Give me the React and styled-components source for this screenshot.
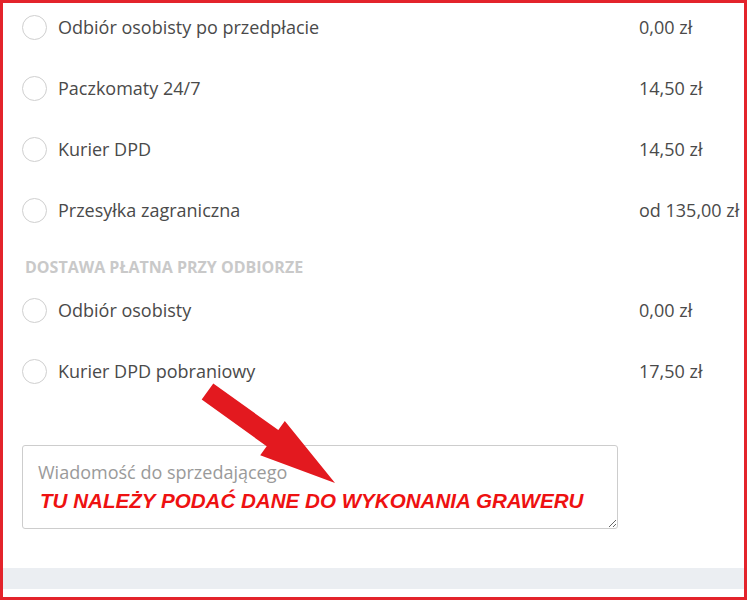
import React from "react";
import styled, { createGlobalStyle } from "styled-components";

const GlobalStyle = createGlobalStyle`
  html, body {
    margin: 0;
    padding: 0;
    background: #fff;
  }
  body {
    font-family: "Open Sans", "Liberation Sans", sans-serif;
  }
`

const Frame = styled.div`
  position: relative;
  box-sizing: border-box;
  width: 747px;
  height: 600px;
  border: 3px solid #e3232b;
  background: #fff;
  display: flex;
  flex-direction: column;
  overflow: hidden;
`

const Content = styled.div`
  display: flex;
  flex-direction: column;
  padding-left: 19px;
  flex: 1;
`

const Option = styled.label`
  display: flex;
  align-items: center;
  height: 48px;
  margin-bottom: 13px;
  cursor: pointer;

  &:last-of-type { margin-bottom: 0; }
`

const Radio = styled.span`
  box-sizing: border-box;
  width: 25px;
  height: 25px;
  border-radius: 50%;
  border: 1.5px solid #cfcfcf;
  background: #fff;
  flex-shrink: 0;
`

const Label = styled.span`
  flex: 1;
  margin-left: 11px;
  font-size: 18px;
  color: #4a4a4a;
  white-space: nowrap;
`

const Price = styled.span`
  width: 105px;
  font-size: 18px;
  color: #4a4a4a;
  white-space: nowrap;
`

const Group = styled.div`
  display: flex;
  flex-direction: column;
`

const GroupTitle = styled.h4`
  margin: 23px 0 9px 3px;
  font-size: 16px;
  line-height: 20px;
  font-weight: 700;
  text-transform: uppercase;
  color: #c9c9c9;
`

const MessageBox = styled.div`
  position: relative;
  width: 596px;
  margin: 50px 0 0 0;
`

const Textarea = styled.textarea`
  box-sizing: border-box;
  display: block;
  width: 596px;
  height: 84px;
  padding: 14px 15px;
  border: 1px solid #cdcdcd;
  border-radius: 3px;
  font-family: "Open Sans", "Liberation Sans", sans-serif;
  font-size: 18px;
  line-height: 24px;
  color: #444;
  outline: none;

  &::placeholder { color: #9a9a9a; }
`

const Note = styled.span`
  position: absolute;
  left: 18px;
  top: 44px;
  font-family: "Liberation Sans", Arial, sans-serif;
  font-size: 20.6px;
  line-height: 24px;
  font-weight: 700;
  font-style: italic;
  color: #ee1111;
  white-space: nowrap;
  pointer-events: none;
`

const Band = styled.div`
  height: 21px;
  margin-bottom: 8px;
  background: #ebeef2;
`

const Arrow = styled.svg`
  position: absolute;
  left: 192px;
  top: 375px;
  width: 145px;
  height: 110px;
`

const prepaid = [
  { id: 1, name: "Odbiór osobisty po przedpłacie", price: "0,00 zł" },
  { id: 2, name: "Paczkomaty 24/7", price: "14,50 zł" },
  { id: 3, name: "Kurier DPD", price: "14,50 zł" },
  { id: 4, name: "Przesyłka zagraniczna", price: "od 135,00 zł" },
]

const onDelivery = [
  { id: 5, name: "Odbiór osobisty", price: "0,00 zł" },
  { id: 6, name: "Kurier DPD pobraniowy", price: "17,50 zł" },
]

const ShippingOption = ({ item }) => (
  <Option>
    <Radio />
    <Label>{item.name}</Label>
    <Price>{item.price}</Price>
  </Option>
)

const App = () => (
  <>
    <GlobalStyle />
    <Frame>
      <Content>
        <Group>
          {prepaid.map(item => <ShippingOption item={item} key={item.id} />)}
        </Group>
        <GroupTitle>Dostawa płatna przy odbiorze</GroupTitle>
        <Group>
          {onDelivery.map(item => <ShippingOption item={item} key={item.id} />)}
        </Group>
        <MessageBox>
          <Textarea placeholder="Wiadomość do sprzedającego" />
          <Note>TU NALEŻY PODAĆ DANE DO WYKONANIA GRAWERU</Note>
        </MessageBox>
      </Content>
      <Band />
      <Arrow viewBox="195 378 145 110">
        <polygon
          fill="#e3191f"
          points="213.3,383.4 278.3,430.1 284.8,421.1 335,483 260.2,455.3 266.7,446.3 201.7,399.6"
        />
      </Arrow>
    </Frame>
  </>
)

export default App;
